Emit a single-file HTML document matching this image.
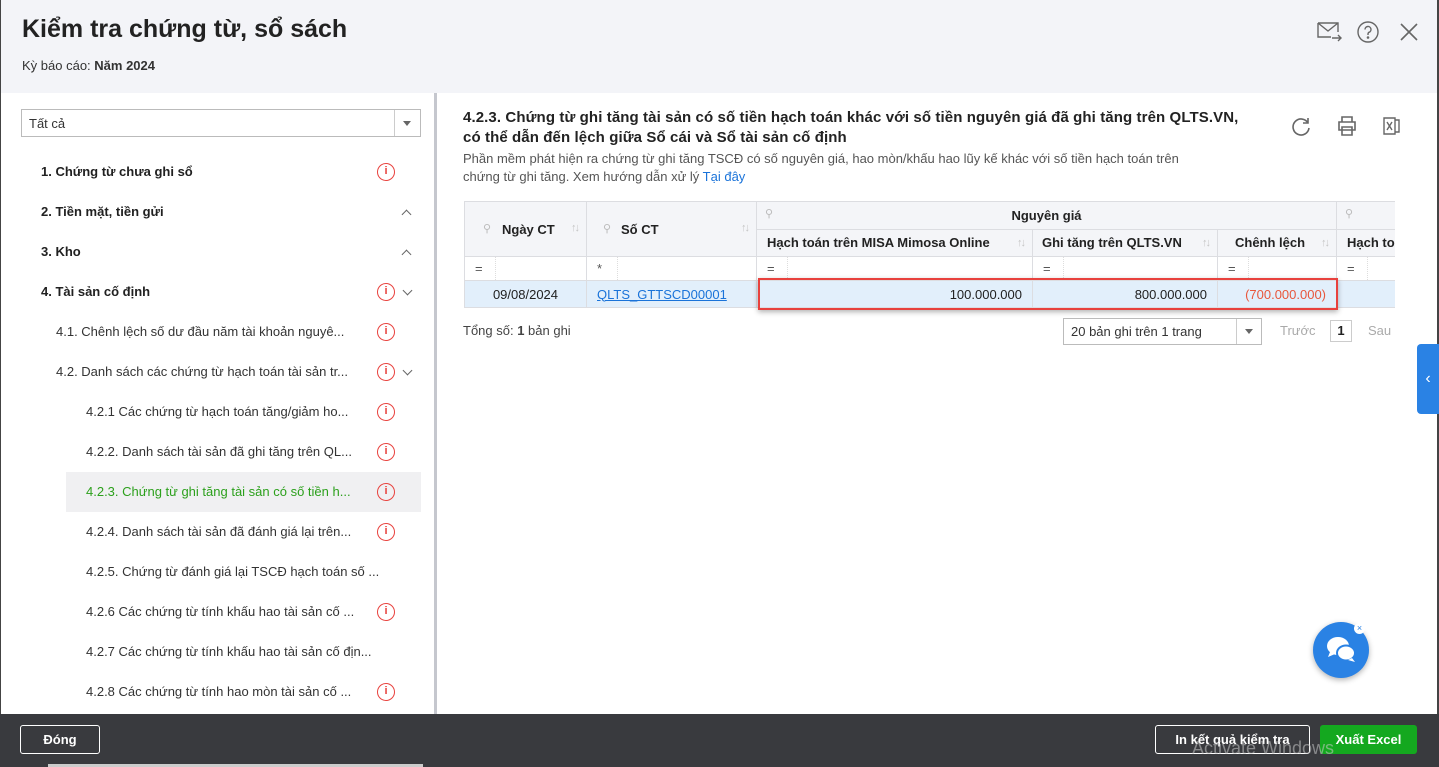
<!DOCTYPE html>
<html><head><meta charset="utf-8"><style>
*{box-sizing:border-box;margin:0;padding:0}
body{width:1439px;height:767px;overflow:hidden;font-family:"Liberation Sans",sans-serif;background:#fff;position:relative;color:#212121}
.abs{position:absolute}
.hdr{left:0;top:0;width:1439px;height:93px;background:#f3f4f8}
.side .it{position:absolute;font-size:13px;font-weight:bold;color:#212121;white-space:nowrap}
.side .l2{font-weight:normal;color:#333}
.info{position:absolute;width:18px;height:18px;border:1.5px solid #e8413d;border-radius:50%;color:#e8413d;font-size:11px;font-weight:bold;text-align:center;line-height:15px}
.chev{position:absolute;width:7px;height:7px;border-left:1.5px solid #666;border-top:1.5px solid #666}
table{border-collapse:collapse;font-size:13px}
td,th{border:1px solid #dcdde1;white-space:nowrap;overflow:hidden;position:relative}
th{background:#f4f5f8;font-weight:bold;color:#222;height:27px}
.pin{color:#bbb;font-size:11px;position:absolute;font-weight:normal}
.srt{color:#c5c5c5;font-size:11px;position:absolute;font-weight:normal;letter-spacing:-2px}
.fd{position:absolute;left:30px;top:0;bottom:0;border-left:1px dotted #ddd}
</style></head><body>
<div class="abs hdr"></div>
<div class="abs" style="left:0;top:0;width:1px;height:767px;background:#444"></div>
<div class="abs" style="right:0;top:0;width:2px;height:767px;background:#444"></div>
<div class="abs" style="left:22px;top:15px;font-size:25px;font-weight:bold;color:#222">Kiểm tra chứng từ, sổ sách</div>
<div class="abs" style="left:22px;top:58px;font-size:13px;color:#333">Kỳ báo cáo: <b>Năm 2024</b></div>
<svg class="abs" style="left:1316px;top:20px" width="28" height="24" viewBox="0 0 28 24" fill="none" stroke="#666" stroke-width="1.4"><path d="M2 3h20v9M2 3v14h13M2 3l10 8 10-8M16 18h9M22 15l3 3-3 3"/></svg>
<svg class="abs" style="left:1357px;top:21px" width="22" height="22" viewBox="0 0 22 22" fill="none" stroke="#666" stroke-width="1.4"><circle cx="11" cy="11" r="10"/><path d="M8 8.5a3 3 0 1 1 4 2.8c-.8.4-1 1-1 2v.7"/><circle cx="11" cy="16.5" r=".6" fill="#666"/></svg>
<svg class="abs" style="left:1399px;top:22px" width="20" height="20" stroke="#666" stroke-width="1.6"><path d="M2 2l16 16M18 2L2 18"/></svg>

<div class="abs" style="left:434px;top:93px;width:3px;height:621px;background:#c5c7ce"></div>
<div class="side">
<div class="abs" style="left:21px;top:109px;width:400px;height:28px;border:1px solid #bbb;font-size:13px;padding:6px 7px;color:#333">Tất cả</div>
<div class="abs" style="left:394px;top:110px;width:1px;height:26px;background:#ccc"></div>
<div class="abs" style="left:403px;top:121px;border-left:4px solid transparent;border-right:4px solid transparent;border-top:5px solid #666"></div>
<div class="abs" style="left:66px;top:472px;width:355px;height:40px;background:#f0f0f2"></div>
<div class="it" style="left:41px;top:164px">1. Chứng từ chưa ghi sổ</div><div class="info" style="left:377px;top:163px">i</div>
<div class="it" style="left:41px;top:204px">2. Tiền mặt, tiền gửi</div><div class="chev" style="left:403px;top:211px;transform:rotate(45deg)"></div>
<div class="it" style="left:41px;top:244px">3. Kho</div><div class="chev" style="left:403px;top:251px;transform:rotate(45deg)"></div>
<div class="it" style="left:41px;top:284px">4. Tài sản cố định</div><div class="info" style="left:377px;top:283px">i</div><div class="chev" style="left:404px;top:287px;transform:rotate(225deg)"></div>
<div class="it l2" style="left:56px;top:324px">4.1. Chênh lệch số dư đầu năm tài khoản nguyê...</div><div class="info" style="left:377px;top:323px">i</div>
<div class="it l2" style="left:56px;top:364px">4.2. Danh sách các chứng từ hạch toán tài sản tr...</div><div class="info" style="left:377px;top:363px">i</div><div class="chev" style="left:404px;top:367px;transform:rotate(225deg)"></div>
<div class="it l2" style="left:86px;top:404px">4.2.1 Các chứng từ hạch toán tăng/giảm ho...</div><div class="info" style="left:377px;top:403px">i</div>
<div class="it l2" style="left:86px;top:444px">4.2.2. Danh sách tài sản đã ghi tăng trên QL...</div><div class="info" style="left:377px;top:443px">i</div>
<div class="it l2" style="left:86px;top:484px;color:#2ca01c">4.2.3. Chứng từ ghi tăng tài sản có số tiền h...</div><div class="info" style="left:377px;top:483px">i</div>
<div class="it l2" style="left:86px;top:524px">4.2.4. Danh sách tài sản đã đánh giá lại trên...</div><div class="info" style="left:377px;top:523px">i</div>
<div class="it l2" style="left:86px;top:564px">4.2.5. Chứng từ đánh giá lại TSCĐ hạch toán số ...</div>
<div class="it l2" style="left:86px;top:604px">4.2.6 Các chứng từ tính khấu hao tài sản cố ...</div><div class="info" style="left:377px;top:603px">i</div>
<div class="it l2" style="left:86px;top:644px">4.2.7 Các chứng từ tính khấu hao tài sản cố địn...</div>
<div class="it l2" style="left:86px;top:684px">4.2.8 Các chứng từ tính hao mòn tài sản cố ...</div><div class="info" style="left:377px;top:683px">i</div>
</div>

<div class="abs" style="left:463px;top:108px;font-size:15px;font-weight:bold;line-height:20px;color:#222;letter-spacing:0.1px">4.2.3. Chứng từ ghi tăng tài sản có số tiền hạch toán khác với số tiền nguyên giá đã ghi tăng trên QLTS.VN,<br>có thể dẫn đến lệch giữa Sổ cái và Sổ tài sản cố định</div>
<div class="abs" style="left:463px;top:150px;font-size:13px;line-height:18px;color:#555">Phần mềm phát hiện ra chứng từ ghi tăng TSCĐ có số nguyên giá, hao mòn/khấu hao lũy kế khác với số tiền hạch toán trên<br>chứng từ ghi tăng. Xem hướng dẫn xử lý <span style="color:#1a73d9">Tại đây</span></div>
<svg class="abs" style="left:1290px;top:115px" width="22" height="22" fill="none" stroke="#666" stroke-width="1.6"><path d="M18 8A8 8 0 1 0 19 13M18 3v5h-5"/></svg>
<svg class="abs" style="left:1336px;top:115px" width="22" height="22" fill="none" stroke="#666" stroke-width="1.6"><path d="M6 7V2h10v5M3 7h16v8H3zM6 12h10v8H6z"/></svg>
<svg class="abs" style="left:1382px;top:115px" width="20" height="22" fill="none" stroke="#666" stroke-width="1.4"><path d="M2 3h11v16H2zM13 5h4v12h-4M5 7l5 8M10 7l-5 8"/></svg>

<div class="abs" style="left:464px;top:201px;width:931px;height:107px;overflow:hidden">
<table style="width:1000px;table-layout:fixed">
<colgroup><col style="width:122px"><col style="width:170px"><col style="width:276px"><col style="width:185px"><col style="width:119px"><col style="width:128px"></colgroup>
<tr><th rowspan="2" style="height:55px;text-align:left;padding-left:37px"><span class="pin" style="left:18px;top:20px">⚲</span>Ngày CT<span class="srt" style="right:8px;top:20px">↑↓</span></th><th rowspan="2" style="text-align:left;padding-left:34px"><span class="pin" style="left:16px;top:20px">⚲</span>Số CT<span class="srt" style="right:8px;top:20px">↑↓</span></th><th colspan="3"><span class="pin" style="left:8px;top:5px">⚲</span>Nguyên giá</th><th><span class="pin" style="left:8px;top:5px">⚲</span></th></tr>
<tr><th style="text-align:left;padding-left:10px">Hạch toán trên MISA Mimosa Online<span class="srt" style="right:8px;top:7px">↑↓</span></th><th style="text-align:left;padding-left:9px">Ghi tăng trên QLTS.VN<span class="srt" style="right:8px;top:7px">↑↓</span></th><th style="text-align:left;padding-left:17px">Chênh lệch<span class="srt" style="right:8px;top:7px">↑↓</span></th><th style="text-align:left;padding-left:10px">Hạch toán</th></tr>
<tr style="height:24px;color:#555"><td style="padding-left:10px">=<span class="fd"></span></td><td style="padding-left:10px">*<span class="fd"></span></td><td style="padding-left:10px">=<span class="fd"></span></td><td style="padding-left:10px">=<span class="fd"></span></td><td style="padding-left:10px">=<span class="fd"></span></td><td style="padding-left:10px">=<span class="fd"></span></td></tr>
<tr style="height:27px;background:#e2effb"><td style="text-align:center">09/08/2024</td><td style="padding-left:10px;color:#1a73d9;text-decoration:underline">QLTS_GTTSCD00001</td><td style="text-align:right;padding-right:10px">100.000.000</td><td style="text-align:right;padding-right:10px">800.000.000</td><td style="text-align:right;padding-right:10px;color:#e8573c">(700.000.000)</td><td></td></tr>
</table></div>
<div class="abs" style="left:758px;top:278px;width:580px;height:32px;border:2.5px solid #e8413d;box-shadow:0 2px 5px rgba(0,0,0,.3)"></div>

<div class="abs" style="left:463px;top:323px;font-size:13px;color:#444">Tổng số: <b>1</b> bản ghi</div>
<div class="abs" style="left:1063px;top:318px;width:199px;height:27px;border:1px solid #bbb;font-size:13px;padding:5px 7px;color:#333">20 bản ghi trên 1 trang</div>
<div class="abs" style="left:1236px;top:319px;width:1px;height:25px;background:#ccc"></div>
<div class="abs" style="left:1245px;top:329px;border-left:4px solid transparent;border-right:4px solid transparent;border-top:5px solid #666"></div>
<div class="abs" style="left:1280px;top:323px;font-size:13px;color:#aaa">Trước</div>
<div class="abs" style="left:1330px;top:320px;width:22px;height:22px;border:1px solid #ccc;font-size:13px;text-align:center;line-height:20px;font-weight:bold">1</div>
<div class="abs" style="left:1368px;top:323px;font-size:13px;color:#aaa">Sau</div>

<div class="abs" style="left:1417px;top:344px;width:22px;height:70px;background:#2a82e4;border-radius:4px 0 0 4px;color:#fff;font-size:16px;line-height:70px;text-align:center">‹</div>
<div class="abs" style="left:1313px;top:622px;width:56px;height:56px;border-radius:50%;background:#2a82e4;box-shadow:0 2px 6px rgba(0,0,0,.3)"></div>
<svg class="abs" style="left:1325px;top:634px" width="34" height="32" fill="#fff"><ellipse cx="13" cy="12" rx="11" ry="9"/><path d="M5 18l-2 5 7-3z"/><ellipse cx="21" cy="19" rx="9" ry="7.5" stroke="#2a82e4" stroke-width="2"/><path d="M27 24l3 4-7-2z"/></svg>
<div class="abs" style="left:1354px;top:623px;width:11px;height:11px;border-radius:50%;background:#fff;color:#2a82e4;font-size:9px;line-height:11px;text-align:center">×</div>

<div class="abs" style="left:0;top:714px;width:1439px;height:53px;background:#393a3e"></div>
<div class="abs" style="left:20px;top:725px;width:80px;height:29px;border:1px solid #fff;border-radius:3px;color:#fff;font-size:13px;font-weight:bold;text-align:center;line-height:27px">Đóng</div>
<div class="abs" style="left:1155px;top:725px;width:155px;height:29px;border:1px solid #fff;border-radius:3px;color:#fff;font-size:13px;font-weight:bold;text-align:center;line-height:27px">In kết quả kiểm tra</div>
<div class="abs" style="left:1320px;top:725px;width:97px;height:29px;background:#14a81f;border-radius:3px;color:#fff;font-size:13px;font-weight:bold;text-align:center;line-height:29px">Xuất Excel</div>
<div class="abs" style="left:1192px;top:738px;font-size:18px;color:rgba(200,200,200,.55)">Activate Windows</div>
<div class="abs" style="left:48px;top:764px;width:375px;height:3px;background:#ccc"></div>
</body></html>
